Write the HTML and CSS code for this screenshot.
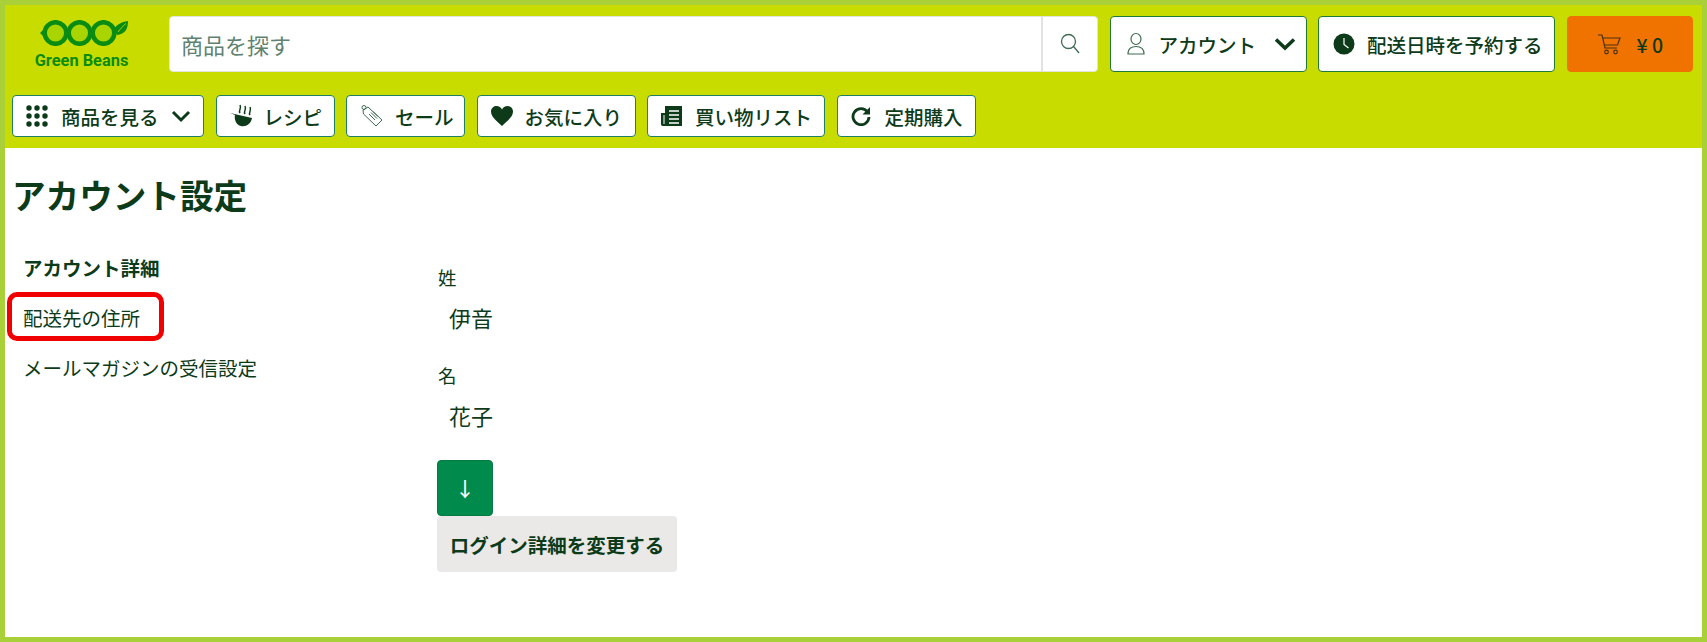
FILE: index.html
```html
<!DOCTYPE html>
<html lang="ja">
<head>
    <meta charset="UTF-8">
    <title>アカウント設定</title>
    <link rel="stylesheet" href="styles.css">
</head>
<body>
    <div class="page">
        <header class="site-header">
            <div class="top-row">
                <a class="logo">
                    <svg class="logo-mark" width="88" height="26" viewBox="0 0 88 26">
                        <path d="M4 9 L0 13 L4 17Z" fill="#0a8c12"/>
                        <path d="M74 9 C76 5 81 2 88 1 C88 9 85 14 77 15Z" fill="#0a8c12"/>
                        <path d="M78 12 C80 9 83 6 86 3.500" stroke="#c8dc00" stroke-width="0.800" fill="none"/>
                        <circle cx="15.500" cy="13" r="10.800" fill="#a8d400" stroke="#0a8c12" stroke-width="4.500"/>
                        <circle cx="39.500" cy="13" r="10.800" fill="#a8d400" stroke="#0a8c12" stroke-width="4.500"/>
                        <circle cx="63.500" cy="13" r="10.800" fill="#a8d400" stroke="#0a8c12" stroke-width="4.500"/>
                    </svg>
                    <span class="logo-text">Green Beans</span>
                </a>
                <div class="search">
                    <div class="search-input">商品を探す</div>
                    <div class="search-btn">
                        <svg width="24" height="24" viewBox="0 0 24 24" fill="none" stroke="#3f6b52" stroke-width="1.300"><circle cx="10.500" cy="9.500" r="7"/><path d="M15.500 14.500 L21 21"/></svg>
                    </div>
                </div>
                <button class="top-btn account-btn">
                    <svg width="20" height="24" viewBox="0 0 20 24" fill="none" stroke="#3f6b52" stroke-width="1.200"><ellipse cx="10" cy="7" rx="5" ry="5.500"/><path d="M2 22 C2 16 6 14.500 10 14.500 C14 14.500 18 16 18 22Z"/></svg>
                    <span>アカウント</span>
                    <svg class="chevron" width="22" height="14" viewBox="0 0 22 14" fill="none" stroke="#0d3b1a" stroke-width="3.500"><path d="M2 2.500 L11 11 L20 2.500"/></svg>
                </button>
                <button class="top-btn delivery-btn">
                    <svg width="22" height="22" viewBox="0 0 22 22"><circle cx="11" cy="11" r="10.500" fill="#0d3b1a"/><path d="M11 5 V11.500 L15.500 15" stroke="#fff" stroke-width="1.200" fill="none"/></svg>
                    <span>配送日時を予約する</span>
                </button>
                <button class="top-btn cart-btn">
                    <svg width="24" height="24" viewBox="0 0 24 24" fill="none" stroke="#4a3210" stroke-width="1.200"><path d="M1 3 H5 L8 16 H20 M6 6 H23 L20.500 13 H7.500"/><circle cx="9.500" cy="20" r="1.800"/><circle cx="18.500" cy="20" r="1.800"/></svg>
                    <span>¥ 0</span>
                </button>
            </div>
            <nav class="nav-row">
                <a class="nav-btn nav-products">
                    <svg width="22" height="22" viewBox="0 0 22 22" fill="#0d3b1a"><circle cx="3" cy="3" r="2.700"/><circle cx="11" cy="3" r="2.700"/><circle cx="19" cy="3" r="2.700"/><circle cx="3" cy="11" r="2.700"/><circle cx="11" cy="11" r="2.700"/><circle cx="19" cy="11" r="2.700"/><circle cx="3" cy="19" r="2.700"/><circle cx="11" cy="19" r="2.700"/><circle cx="19" cy="19" r="2.700"/></svg>
                    <span>商品を見る</span>
                    <svg class="chevron" width="20" height="13" viewBox="0 0 20 13" fill="none" stroke="#0d3b1a" stroke-width="3"><path d="M2 2 L10 10 L18 2"/></svg>
                </a>
                <a class="nav-btn nav-recipe">
                    <svg width="24" height="24" viewBox="0 0 24 24"><path d="M0 9 L22 14 C21 20 16 23 11 22 C6 21 4 15 5 11Z" fill="#0d3b1a"/><path d="M10 9 C8 6 12 5 10 1 M15 10 C13 7 17 6 15 2 M20 11 C18 8 22 7 20 3" stroke="#0d3b1a" stroke-width="1.500" fill="none"/></svg>
                    <span>レシピ</span>
                </a>
                <a class="nav-btn nav-sale">
                    <svg width="24" height="24" viewBox="0 0 24 24" fill="none" stroke="#3f6b52" stroke-width="1"><path d="M3 6 L8 3 L22 16 L16 22 L3.500 10Z"/><circle cx="4" cy="3.500" r="2"/><path d="M9 10 L15 16 M11 8.500 L17 14.500 M13 7.500 L18 12.500"/></svg>
                    <span>セール</span>
                </a>
                <a class="nav-btn nav-fav">
                    <svg width="22" height="20" viewBox="0 0 22 20"><path d="M11 20 C6 15 0 11 0 5.500 C0 2 3 0 5.500 0 C8 0 10 1.500 11 3.500 C12 1.500 14 0 16.500 0 C19 0 22 2 22 5.500 C22 11 16 15 11 20Z" fill="#0d3b1a"/></svg>
                    <span>お気に入り</span>
                </a>
                <a class="nav-btn nav-list">
                    <svg width="22" height="22" viewBox="0 0 22 22"><path d="M4 1 H21 V21 H2 C0.500 21 0 20 0 19 V8 H4Z" fill="#0d3b1a"/><path d="M8 6 H18 M8 10 H18 M8 14 H18 M8 18 H18" stroke="#fff" stroke-width="1.500"/><path d="M3 10 V19" stroke="#fff" stroke-width="1"/></svg>
                    <span>買い物リスト</span>
                </a>
                <a class="nav-btn nav-repeat">
                    <svg width="20" height="20" viewBox="0 0 20 20" fill="none"><path d="M16.500 6 A8 8 0 1 0 18 11" stroke="#0d3b1a" stroke-width="2.800"/><path d="M19 1 V8.500 H11.500Z" fill="#0d3b1a"/></svg>
                    <span>定期購入</span>
                </a>
            </nav>
        </header>

        <main class="content">
            <h1 class="title">アカウント設定</h1>
            <div class="columns">
                <ul class="side-menu">
                    <li class="active">アカウント詳細</li>
                    <li>配送先の住所</li>
                    <li>メールマガジンの受信設定</li>
                </ul>
                <div class="details">
                    <div class="field-label">姓</div>
                    <div class="field-value">伊音</div>
                    <div class="field-label">名</div>
                    <div class="field-value">花子</div>
                    <button class="arrow-btn">↓</button>
                    <button class="change-btn">ログイン詳細を変更する</button>
                </div>
            </div>
        </main>

        <!-- 赤枠の注釈 -->
        <div class="callout"></div>
    </div>
</body>
</html>
```

FILE: styles.css
```css
/* 全体 */
* {
    box-sizing: border-box;
}

body {
    margin: 0;
    background: #fff;
    color: #0d3b1a;
    font-family: "Noto Sans CJK JP", "Noto Sans", sans-serif;
}

.page {
    position: relative;
    width: 1707px;
    height: 642px;
    border: 5px solid #a9d039;
    overflow: hidden;
}

button {
    font-family: inherit;
    color: inherit;
    cursor: pointer;
}

svg {
    flex-shrink: 0;
}

/* ヘッダー */
.site-header {
    height: 143px;
    padding-top: 11px;
    background: #c8dc00;
}

.top-row {
    display: flex;
    gap: 11.500px;
    height: 56px;
}

.logo {
    display: flex;
    flex-direction: column;
    align-items: center;
    width: 164px;
    margin-right: -11.500px;
    padding-right: 11px;
    padding-top: 4px;
}

.logo-mark {
    margin-left: 5px;
}

.logo-text {
    margin-top: 6px;
    font-family: "Roboto", sans-serif;
    font-size: 16.400px;
    font-weight: 700;
    line-height: 18px;
    color: #0a8c12;
}

.search {
    display: flex;
    width: 929px;
    background: #fff;
    border: 1px solid #e4e4dc;
    border-radius: 4px;
}

.search-input {
    flex: 1;
    padding-left: 11px;
    font-size: 22px;
    line-height: 54px;
    color: #5f8272;
}

.search-btn {
    display: flex;
    align-items: center;
    justify-content: center;
    width: 56px;
    border-left: 2px solid #e2e2e0;
}

.top-btn {
    display: flex;
    align-items: center;
    height: 56px;
    padding: 0;
    background: #fff;
    border: 1px solid #1f7a35;
    border-radius: 4px;
    font-size: 19.500px;
    font-weight: 500;
}

.account-btn {
    width: 197px;
    padding-left: 15px;
    gap: 13px;
}

.account-btn .chevron {
    margin-left: 5px;
}

.delivery-btn {
    width: 237px;
    padding-left: 14px;
    gap: 12px;
}

.cart-btn {
    width: 126px;
    padding-left: 29px;
    gap: 16px;
    background: #f07300;
    border-color: #f07300;
}

/* ナビ */
.nav-row {
    display: flex;
    gap: 11.500px;
    margin-top: 23px;
    padding-left: 7px;
}

.nav-btn {
    display: flex;
    align-items: center;
    height: 42px;
    padding-left: 13px;
    background: #fff;
    border: 1px solid #1f7f66;
    border-radius: 4px;
    font-size: 19.500px;
    font-weight: 500;
    white-space: nowrap;
}

.nav-products { width: 192px; gap: 13px; }
.nav-products .chevron { margin-left: -1px; }
.nav-recipe { width: 119px; gap: 10px; }
.nav-sale { width: 119px; gap: 11px; }
.nav-fav { width: 159px; gap: 12px; }
.nav-list { width: 178px; gap: 12px; }
.nav-repeat { width: 139px; gap: 14px; }

/* 本文 */
.content {
    padding: 24px 0 0 9px;
}

.title {
    margin: 0 0 0 -2px;
    font-size: 33.600px;
    font-weight: 700;
    line-height: 46px;
}

.columns {
    display: grid;
    grid-template-columns: 423px 1fr;
    margin-top: 36px;
}

.side-menu {
    margin: 0;
    padding: 0 0 0 9px;
    list-style: none;
    font-size: 19.500px;
}

.side-menu li {
    height: 50px;
    line-height: 28px;
}

.side-menu .active {
    font-weight: 700;
}

.details {
    margin-top: 8px;
    font-size: 18.500px;
}

.field-label {
    padding-left: 1px;
    line-height: 30px;
}

.field-value {
    height: 68px;
    padding: 9px 0 0 12px;
    font-size: 22px;
    line-height: 32px;
}

.arrow-btn {
    display: block;
    width: 56px;
    height: 56px;
    margin-top: 2px;
    padding: 0;
    background: #008a4b;
    border: 1px solid #0a7a45;
    border-radius: 4px;
    color: #fff;
    font-size: 20px;
    font-weight: 500;
}

.change-btn {
    display: block;
    width: 240px;
    height: 56px;
    padding: 0;
    background: #eae9e7;
    border: none;
    border-radius: 4px;
    font-size: 19.500px;
    font-weight: 700;
}

/* 注釈 */
.callout {
    position: absolute;
    left: 2px;
    top: 287px;
    width: 157px;
    height: 49px;
    border: 5px solid #f00000;
    border-radius: 10px;
}
```
